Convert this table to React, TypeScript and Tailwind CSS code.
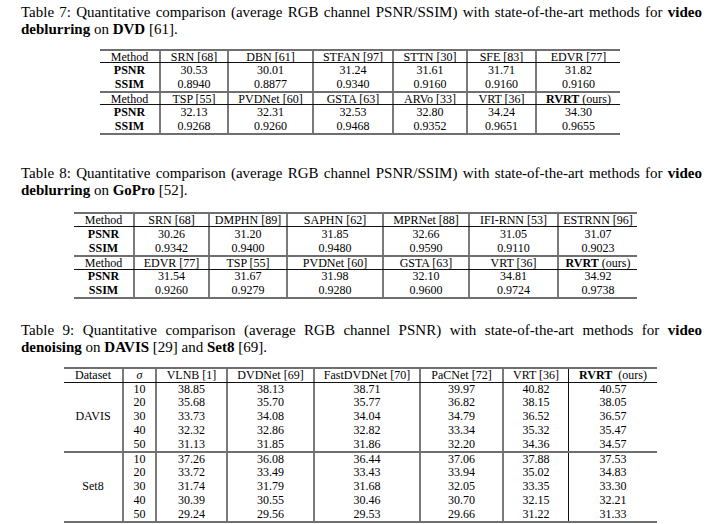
import React from "react";

type Line = "thick" | "thin" | "none";
type RowSpec = { h: string; line: Line; cells: React.ReactNode[]; boldFirst?: boolean };

const lineClass: Record<Line, string> = {
  thick: "border-t-2 border-[#6f6f6f]",
  thin: "border-t border-[#111]",
  none: "",
};

function Ours({ wide }: { wide?: boolean }) {
  return (
    <span>
      <b>RVRT</b>
      <span className={wide ? "ml-[6px]" : "ml-[3px]"}>(ours)</span>
    </span>
  );
}

function Table({
  left,
  widths,
  rows,
  thinCol,
}: {
  left: string;
  widths: string[];
  rows: RowSpec[];
  thinCol?: number;
}) {
  return (
    <div className={`${left} w-fit border-b-2 border-[#6f6f6f] text-[12px] leading-none text-black`}>
      {rows.map((r, ri) => (
        <div key={ri} className={`flex ${r.h} ${lineClass[r.line]}`}>
          {r.cells.map((c, ci) => (
            <div
              key={ci}
              className={`flex items-center justify-center whitespace-nowrap ${widths[ci]} ${
                ci === 0
                  ? ""
                  : ci === thinCol
                  ? "border-l border-[#111]"
                  : "border-l-2 border-[#7a7a7a]"
              } ${ci === 0 && r.boldFirst ? "font-bold" : ""}`}
            >
              {c}
            </div>
          ))}
        </div>
      ))}
    </div>
  );
}

function Caption({ first, second }: { first: React.ReactNode; second: React.ReactNode }) {
  return (
    <div className="text-[15px] leading-[16.7px] text-black">
      <div className="whitespace-nowrap text-justify [text-align-last:justify]">{first}</div>
      <div className="whitespace-nowrap">{second}</div>
    </div>
  );
}

const w7 = ["w-[59px]", "w-[68px]", "w-[85px]", "w-[80px]", "w-[74px]", "w-[69px]", "w-[85px]"];
const w8 = ["w-[59px]", "w-[75px]", "w-[78px]", "w-[96px]", "w-[86px]", "w-[89px]", "w-[80px]"];
const w9 = ["w-[58px]", "w-[33px]", "w-[71px]", "w-[87px]", "w-[106px]", "w-[83px]", "w-[66px]", "w-[89px]"];

const table7: RowSpec[] = [
  { h: "h-[13px]", line: "thick", cells: ["Method", "SRN [68]", "DBN [61]", "STFAN [97]", "STTN [30]", "SFE [83]", "EDVR [77]"] },
  { h: "h-[14px]", line: "thin", boldFirst: true, cells: ["PSNR", "30.53", "30.01", "31.24", "31.61", "31.71", "31.82"] },
  { h: "h-[15px]", line: "none", boldFirst: true, cells: ["SSIM", "0.8940", "0.8877", "0.9340", "0.9160", "0.9160", "0.9160"] },
  { h: "h-[13px]", line: "thick", cells: ["Method", "TSP [55]", "PVDNet [60]", "GSTA [63]", "ARVo [33]", "VRT [36]", <Ours key="o" />] },
  { h: "h-[14.5px]", line: "thin", boldFirst: true, cells: ["PSNR", "32.13", "32.31", "32.53", "32.80", "34.24", "34.30"] },
  { h: "h-[14.5px]", line: "none", boldFirst: true, cells: ["SSIM", "0.9268", "0.9260", "0.9468", "0.9352", "0.9651", "0.9655"] },
];

const table8: RowSpec[] = [
  { h: "h-[14px]", line: "thick", cells: ["Method", "SRN [68]", "DMPHN [89]", "SAPHN [62]", "MPRNet [88]", "IFI-RNN [53]", "ESTRNN [96]"] },
  { h: "h-[14.5px]", line: "thin", boldFirst: true, cells: ["PSNR", "30.26", "31.20", "31.85", "32.66", "31.05", "31.07"] },
  { h: "h-[15px]", line: "none", boldFirst: true, cells: ["SSIM", "0.9342", "0.9400", "0.9480", "0.9590", "0.9110", "0.9023"] },
  { h: "h-[13.5px]", line: "thick", cells: ["Method", "EDVR [77]", "TSP [55]", "PVDNet [60]", "GSTA [63]", "VRT [36]", <Ours key="o" />] },
  { h: "h-[14px]", line: "thin", boldFirst: true, cells: ["PSNR", "31.54", "31.67", "31.98", "32.10", "34.81", "34.92"] },
  { h: "h-[14px]", line: "none", boldFirst: true, cells: ["SSIM", "0.9260", "0.9279", "0.9280", "0.9600", "0.9724", "0.9738"] },
];

const davis = [
  ["10", "38.85", "38.13", "38.71", "39.97", "40.82", "40.57"],
  ["20", "35.68", "35.70", "35.77", "36.82", "38.15", "38.05"],
  ["30", "33.73", "34.08", "34.04", "34.79", "36.52", "36.57"],
  ["40", "32.32", "32.86", "32.82", "33.34", "35.32", "35.47"],
  ["50", "31.13", "31.85", "31.86", "32.20", "34.36", "34.57"],
];
const set8 = [
  ["10", "37.26", "36.08", "36.44", "37.06", "37.88", "37.53"],
  ["20", "33.72", "33.49", "33.43", "33.94", "35.02", "34.83"],
  ["30", "31.74", "31.79", "31.68", "32.05", "33.35", "33.30"],
  ["40", "30.39", "30.55", "30.46", "30.70", "32.15", "32.21"],
  ["50", "29.24", "29.56", "29.53", "29.66", "31.22", "31.33"],
];

const table9: RowSpec[] = [
  {
    h: "h-[15px]",
    line: "thick",
    cells: ["Dataset", <i key="s">σ</i>, "VLNB [1]", "DVDNet [69]", "FastDVDNet [70]", "PaCNet [72]", "VRT [36]", <Ours key="o" wide />],
  },
  ...davis.map((r, i) => ({
    h: "h-[13.8px]",
    line: (i === 0 ? "thin" : "none") as Line,
    cells: [i === 2 ? "DAVIS" : "", ...r],
  })),
  ...set8.map((r, i) => ({
    h: "h-[14px]",
    line: (i === 0 ? "thick" : "none") as Line,
    cells: [i === 2 ? "Set8" : "", ...r],
  })),
];

export default function App() {
  return (
    <div className="min-h-[524px] w-[723px] bg-white px-[21px] pt-[4px] font-['Liberation_Serif','Times_New_Roman',serif] text-black">
      <Caption
        first={
          <>
            Table 7: Quantitative comparison (average RGB channel PSNR/SSIM) with state-of-the-art methods for <b>video</b>
          </>
        }
        second={
          <>
            <b>deblurring</b> on <b>DVD</b> [61].
          </>
        }
      />
      <div className="mt-[12px]">
        <Table left="ml-[79px]" widths={w7} rows={table7} />
      </div>

      <div className="mt-[30px]">
        <Caption
          first={
            <>
              Table 8: Quantitative comparison (average RGB channel PSNR/SSIM) with state-of-the-art methods for <b>video</b>
            </>
          }
          second={
            <>
              <b>deblurring</b> on <b>GoPro</b> [52].
            </>
          }
        />
      </div>
      <div className="mt-[13px]">
        <Table left="ml-[53px]" widths={w8} rows={table8} />
      </div>

      <div className="mt-[23.5px]">
        <Caption
          first={
            <>
              Table 9: Quantitative comparison (average RGB channel PSNR) with state-of-the-art methods for <b>video</b>
            </>
          }
          second={
            <>
              <b>denoising</b> on <b>DAVIS</b> [29] and <b>Set8</b> [69].
            </>
          }
        />
      </div>
      <div className="mt-[11px]">
        <Table left="ml-[43px]" widths={w9} rows={table9} thinCol={7} />
      </div>
    </div>
  );
}
